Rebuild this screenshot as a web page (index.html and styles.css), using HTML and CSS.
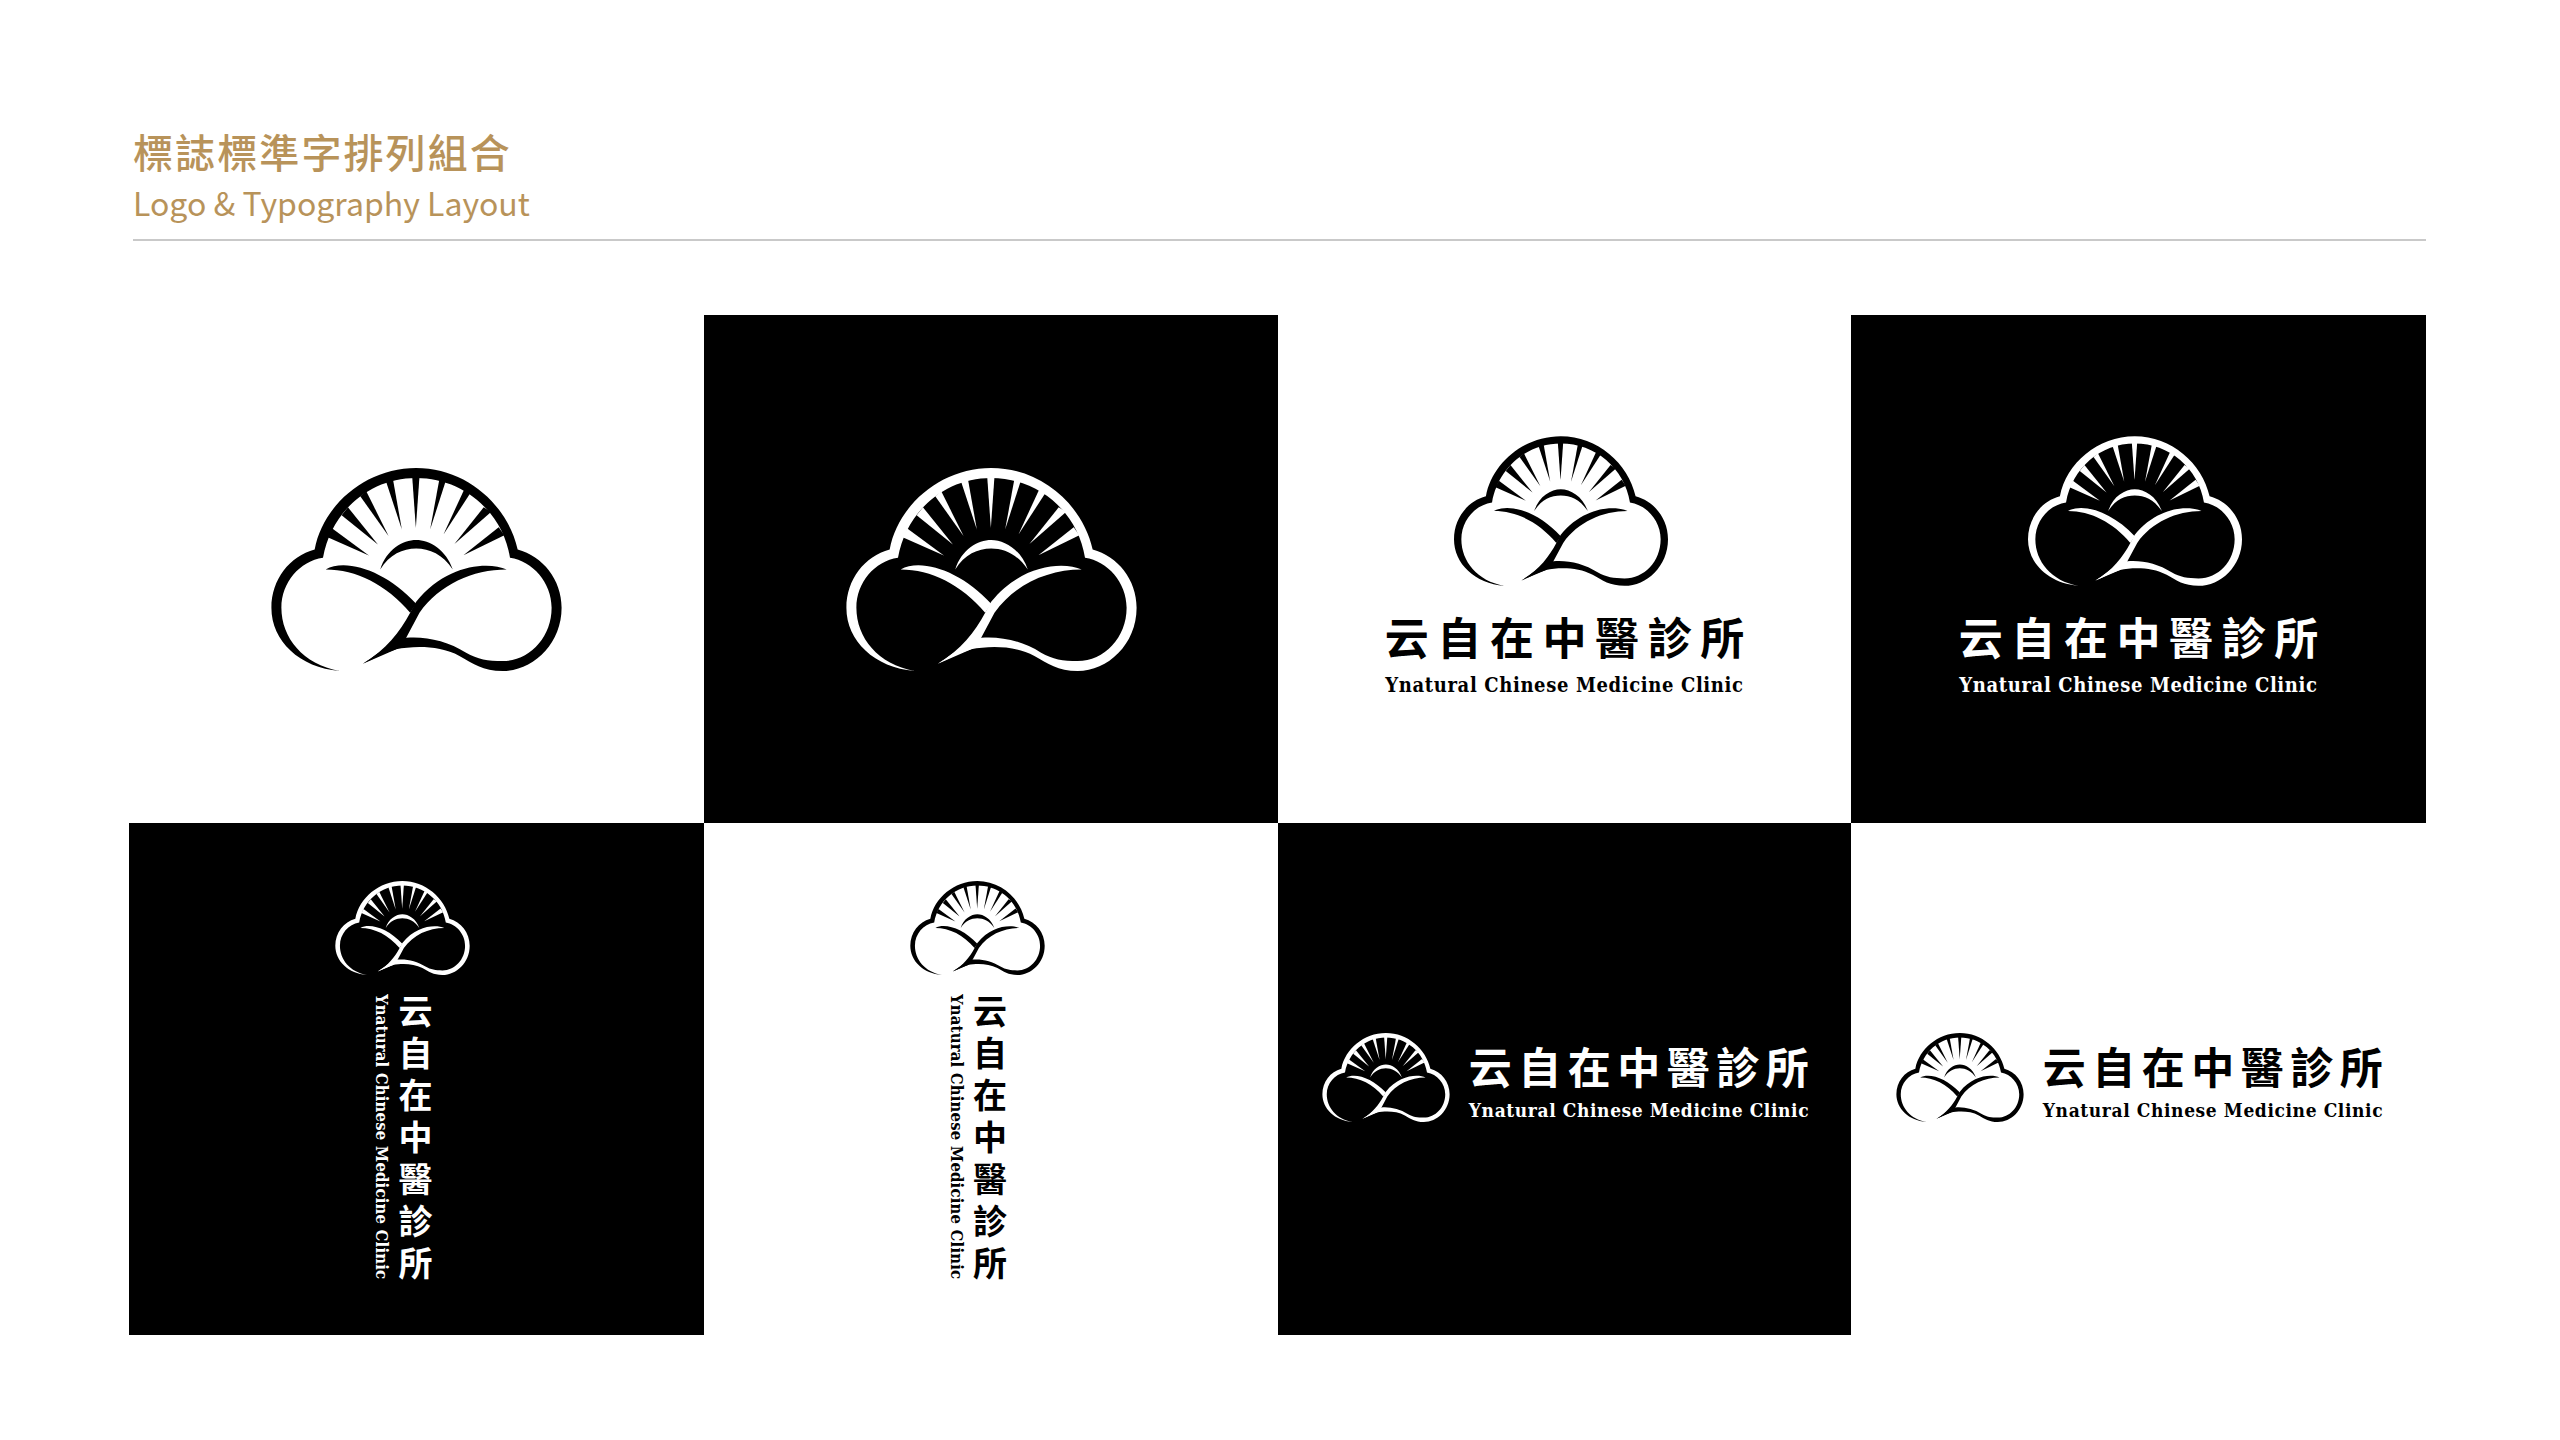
FILE: index.html
```html
<!DOCTYPE html>
<html lang="zh-Hant">
<head>
<meta charset="utf-8">
<title>標誌標準字排列組合</title>
<link rel="stylesheet" href="styles.css">
</head>
<body>
<svg class="defs" width="0" height="0" aria-hidden="true">
  <symbol id="cloud" viewBox="95 80 872 610">
    <path d="M300 690C180 680 95 600 95 500C95 415 150 345 225 325C250 190 380 80 530 80C680 80 805 190 835 325C910 345 967 415 967 500C967 610 880 690 790 690C730 690 700 668 660 645C600 612 520 615 470 625C435 635 400 655 370 668C430 630 470 590 500 590C560 585 625 600 680 635C715 655 745 660 790 660C870 660 937 590 937 500C937 425 880 360 812 350C790 210 670 110 530 110C390 110 275 210 250 350C180 360 125 425 125 500C125 590 190 670 300 690Z"/>
    <path d="M802 385C745 360 620 370 530 482L512 515C480 575 440 625 370 668L470 625L500 590L540 515C600 430 700 385 802 385Z"/>
    <path d="M258 385C320 350 440 390 530 488L512 515C440 430 350 385 258 385Z"/>
    <path d="M422 385C440 325 490 296 530 296C570 296 620 325 640 385C610 340 570 322 530 322C490 322 450 340 422 385Z"/>
    <path d="M278 262L264 288L388 343Z"/>
    <path d="M325 198L306 222L415 310Z"/>
    <path d="M380 150L362 165L447 284Z"/>
    <path d="M460 112L440 122L487 265Z"/>
    <path d="M540 105L518 105L529 260Z"/>
    <path d="M620 115L600 112L572 265Z"/>
    <path d="M693 155L674 145L612 280Z"/>
    <path d="M755 212L733 198L645 308Z"/>
    <path d="M795 282L778 258L672 342Z"/>
  </symbol>
</svg>
<main class="page">
  <header class="head">
    <h1 class="title">標誌標準字排列組合</h1>
    <p class="subtitle">Logo &amp; Typography Layout</p>
  </header>
  <section class="board">
    <div class="card light"><svg class="logo-xl"><use href="#cloud"/></svg></div>
    <div class="card dark"><svg class="logo-xl"><use href="#cloud"/></svg></div>
    <div class="card light">
      <div class="stack">
        <svg class="logo-lg"><use href="#cloud"/></svg>
        <div class="cjk">云自在中醫診所</div>
        <div class="latin">Ynatural Chinese Medicine Clinic</div>
      </div>
    </div>
    <div class="card dark">
      <div class="stack">
        <svg class="logo-lg"><use href="#cloud"/></svg>
        <div class="cjk">云自在中醫診所</div>
        <div class="latin">Ynatural Chinese Medicine Clinic</div>
      </div>
    </div>
    <div class="card dark shift">
      <div class="tall">
        <svg class="logo-md"><use href="#cloud"/></svg>
        <div class="columns">
          <div class="latin-v">Ynatural Chinese Medicine Clinic</div>
          <div class="cjk-v">云自在中醫診所</div>
        </div>
      </div>
    </div>
    <div class="card light shift">
      <div class="tall">
        <svg class="logo-md"><use href="#cloud"/></svg>
        <div class="columns">
          <div class="latin-v">Ynatural Chinese Medicine Clinic</div>
          <div class="cjk-v">云自在中醫診所</div>
        </div>
      </div>
    </div>
    <div class="card dark">
      <div class="wide">
        <svg class="logo-sm"><use href="#cloud"/></svg>
        <div class="words">
          <div class="cjk-w">云自在中醫診所</div>
          <div class="latin-w">Ynatural Chinese Medicine Clinic</div>
        </div>
      </div>
    </div>
    <div class="card light">
      <div class="wide">
        <svg class="logo-sm"><use href="#cloud"/></svg>
        <div class="words">
          <div class="cjk-w">云自在中醫診所</div>
          <div class="latin-w">Ynatural Chinese Medicine Clinic</div>
        </div>
      </div>
    </div>
  </section>
</main>
</body>
</html>
```

FILE: styles.css
```css
* { box-sizing: border-box; }
html, body { margin: 0; background: #fff; }
.defs { display: block; height: 0; }
.page { width: 2560px; height: 1440px; padding: 124px 134px 0 129px; }
.head { margin-left: 4px; height: 117px; border-bottom: 2px solid #c9c9c9; padding: 3px 0 0; }
.title {
  margin: 0;
  font: 500 40px/48px "Noto Sans CJK TC", sans-serif;
  letter-spacing: 2.1px;
  color: #b8935a;
}
.subtitle {
  margin: 5px 0 0;
  font: 400 32px/44px "Noto Sans CJK TC", sans-serif;
  color: #b8935a;
}
.board {
  margin-top: 74px;
  display: grid;
  grid-template-columns: 575px 574px 573px 575px;
  grid-template-rows: 508px 512px;
}
.card { display: flex; align-items: center; justify-content: center; }
.light { background: #fff; color: #000; }
.dark { background: #000; color: #fff; }
.shift { padding-right: 28px; }
svg { fill: currentColor; display: block; }
.logo-xl { width: 291px; height: 203px; }
.logo-lg { width: 214px; height: 150px; margin-right: 6px; }
.logo-md { width: 135px; height: 94px; }
.logo-sm { width: 128px; height: 89px; }
.stack { display: flex; flex-direction: column; align-items: center; padding-bottom: 4px; }
.cjk {
  margin-top: 20.5px;
  font: 700 44px/58px "Noto Sans CJK TC", sans-serif;
  letter-spacing: 8.6px;
  margin-right: -8.6px;
  white-space: nowrap;
}
.latin {
  margin-top: 7px;
  font: 700 20px/26px "DejaVu Serif Condensed", "DejaVu Serif", serif;
  font-stretch: condensed;
  letter-spacing: 0.63px;
  white-space: nowrap;
}
.tall { display: flex; flex-direction: column; align-items: center; gap: 19px; padding-top: 10px; }
.columns { display: flex; gap: 3px; align-items: flex-start; }
.latin-v {
  writing-mode: vertical-rl;
  font: 700 16.5px/22px "DejaVu Serif Condensed", "DejaVu Serif", serif;
  font-stretch: condensed;
  letter-spacing: 0.2px;
  white-space: nowrap;
}
.cjk-v {
  writing-mode: vertical-rl;
  font: 700 34px/40px "Noto Sans CJK TC", sans-serif;
  letter-spacing: 8px;
  white-space: nowrap;
}
.wide { display: flex; align-items: center; gap: 19px; padding-left: 2px; padding-bottom: 3px; }
.words { display: flex; flex-direction: column; padding-top: 3px; }
.cjk-w {
  font: 700 43px/56px "Noto Sans CJK TC", sans-serif;
  letter-spacing: 6.5px;
  margin-right: -6.5px;
  white-space: nowrap;
}
.latin-w {
  margin-top: 5px;
  font: 700 19px/24px "DejaVu Serif Condensed", "DejaVu Serif", serif;
  font-stretch: condensed;
  letter-spacing: 0.6px;
  white-space: nowrap;
}
```
